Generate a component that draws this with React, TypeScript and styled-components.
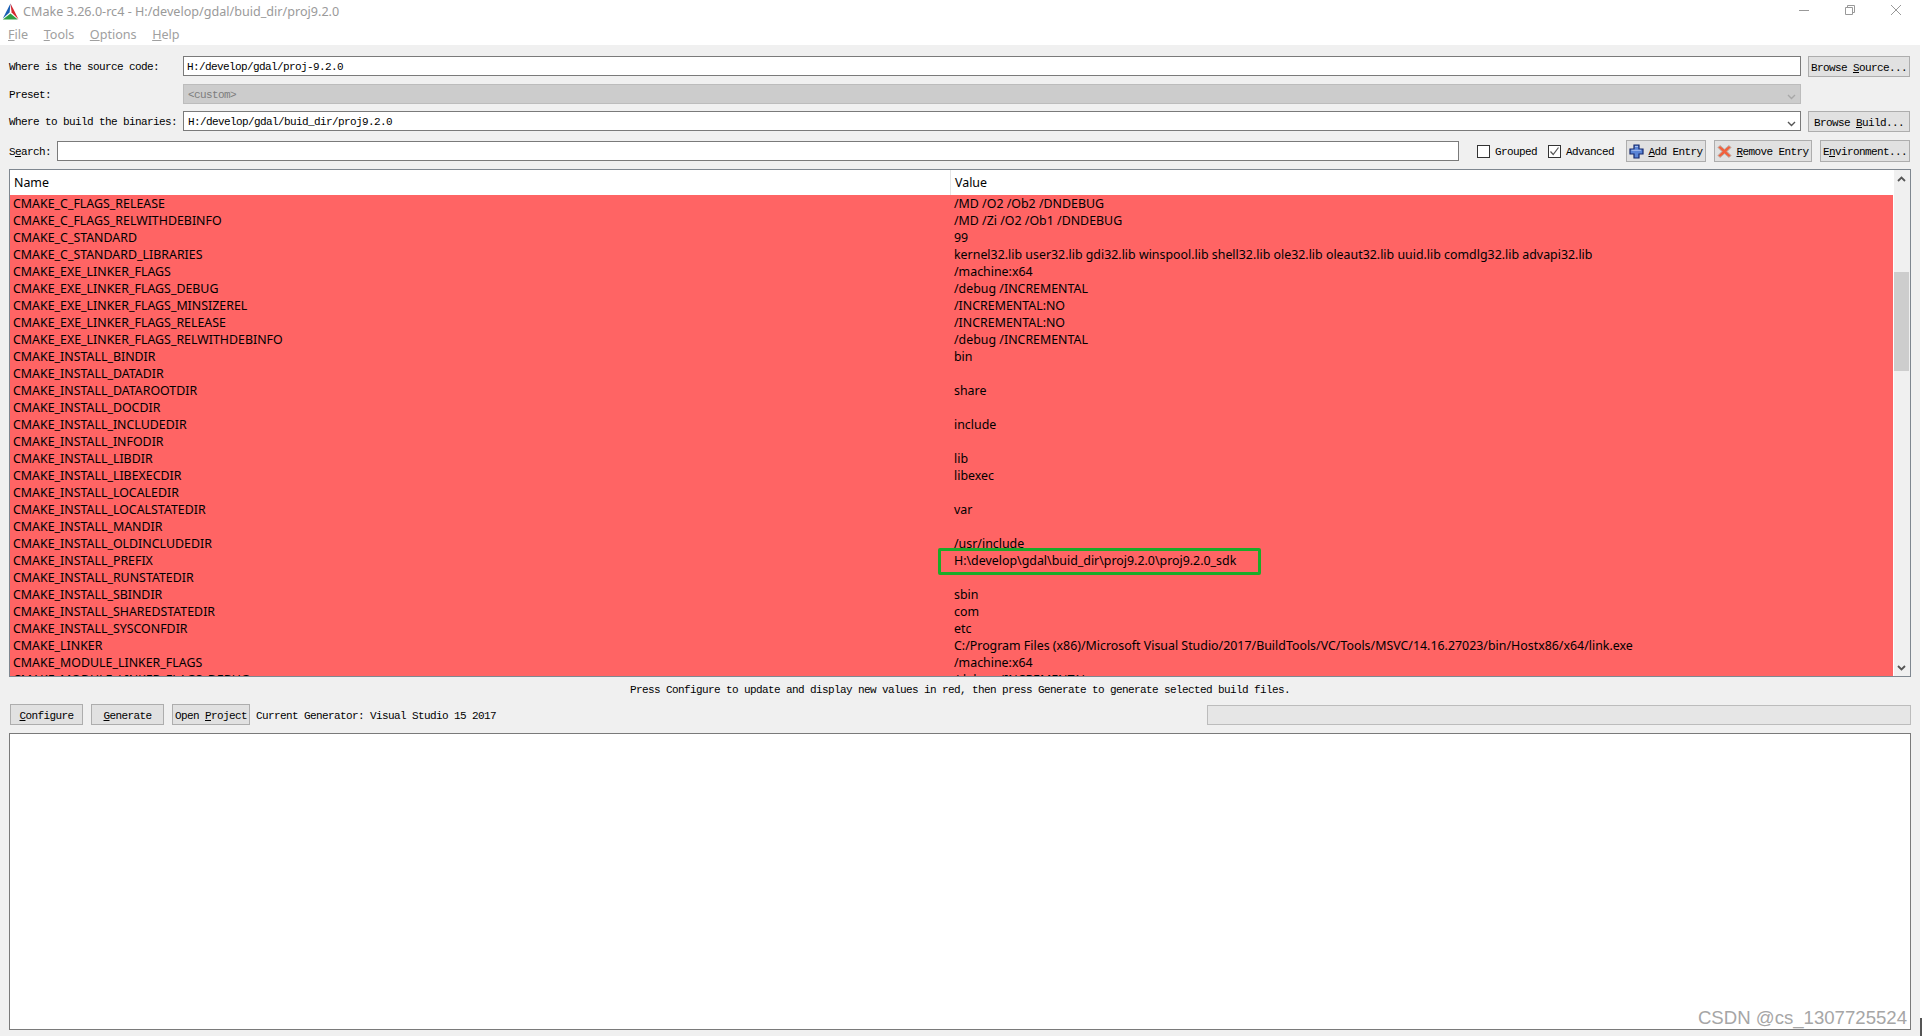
import React from "react";
import styled, { createGlobalStyle } from "styled-components";

const MONO = `"Liberation Mono", "Courier New", monospace`;
const UI = `"Noto Sans", "Open Sans", sans-serif`;

const rows: [string, string][] = [
  ["CMAKE_C_FLAGS_RELEASE", "/MD /O2 /Ob2 /DNDEBUG"],
  ["CMAKE_C_FLAGS_RELWITHDEBINFO", "/MD /Zi /O2 /Ob1 /DNDEBUG"],
  ["CMAKE_C_STANDARD", "99"],
  [
    "CMAKE_C_STANDARD_LIBRARIES",
    "kernel32.lib user32.lib gdi32.lib winspool.lib shell32.lib ole32.lib oleaut32.lib uuid.lib comdlg32.lib advapi32.lib",
  ],
  ["CMAKE_EXE_LINKER_FLAGS", "/machine:x64"],
  ["CMAKE_EXE_LINKER_FLAGS_DEBUG", "/debug /INCREMENTAL"],
  ["CMAKE_EXE_LINKER_FLAGS_MINSIZEREL", "/INCREMENTAL:NO"],
  ["CMAKE_EXE_LINKER_FLAGS_RELEASE", "/INCREMENTAL:NO"],
  ["CMAKE_EXE_LINKER_FLAGS_RELWITHDEBINFO", "/debug /INCREMENTAL"],
  ["CMAKE_INSTALL_BINDIR", "bin"],
  ["CMAKE_INSTALL_DATADIR", ""],
  ["CMAKE_INSTALL_DATAROOTDIR", "share"],
  ["CMAKE_INSTALL_DOCDIR", ""],
  ["CMAKE_INSTALL_INCLUDEDIR", "include"],
  ["CMAKE_INSTALL_INFODIR", ""],
  ["CMAKE_INSTALL_LIBDIR", "lib"],
  ["CMAKE_INSTALL_LIBEXECDIR", "libexec"],
  ["CMAKE_INSTALL_LOCALEDIR", ""],
  ["CMAKE_INSTALL_LOCALSTATEDIR", "var"],
  ["CMAKE_INSTALL_MANDIR", ""],
  ["CMAKE_INSTALL_OLDINCLUDEDIR", "/usr/include"],
  ["CMAKE_INSTALL_PREFIX", "H:\\develop\\gdal\\buid_dir\\proj9.2.0\\proj9.2.0_sdk"],
  ["CMAKE_INSTALL_RUNSTATEDIR", ""],
  ["CMAKE_INSTALL_SBINDIR", "sbin"],
  ["CMAKE_INSTALL_SHAREDSTATEDIR", "com"],
  ["CMAKE_INSTALL_SYSCONFDIR", "etc"],
  [
    "CMAKE_LINKER",
    "C:/Program Files (x86)/Microsoft Visual Studio/2017/BuildTools/VC/Tools/MSVC/14.16.27023/bin/Hostx86/x64/link.exe",
  ],
  ["CMAKE_MODULE_LINKER_FLAGS", "/machine:x64"],
  ["CMAKE_MODULE_LINKER_FLAGS_DEBUG", "/debug /INCREMENTAL"],
];

const Chevron = ({ up, color = "#555", weight = 1.4 }: { up?: boolean; color?: string; weight?: number }) => (
  <svg width="9" height="6" viewBox="0 0 9 6">
    <path
      d={up ? "M1 5 L4.5 1.5 L8 5" : "M1 1 L4.5 4.5 L8 1"}
      fill="none"
      stroke={color}
      strokeWidth={weight}
    />
  </svg>
);

const CMakeLogo = () => (
  <svg width="17" height="17" viewBox="0 0 17 17">
    <path d="M8.5 0.5 L0.8 15.5 L7.6 9.6 Z" fill="#1a5fb4" />
    <path d="M8.5 0.5 L16.6 16.5 L9.6 9.6 Z" fill="#d3272f" />
    <path d="M8.5 10.4 L0.8 16.5 L15.8 16.5 Z" fill="#2f9e44" />
  </svg>
);

const PlusIcon = () => (
  <svg width="15" height="15" viewBox="0 0 15 15">
    <path
      d="M5 1 H10 V5 H14 V10 H10 V14 H5 V10 H1 V5 H5 Z"
      fill="#5a84d6"
      stroke="#14296e"
      strokeWidth="1.2"
    />
    <path d="M6 2.5 H9 M2.5 6.3 H12" stroke="#a9c0ee" strokeWidth="1" />
  </svg>
);

const CrossIcon = () => (
  <svg width="15" height="15" viewBox="0 0 15 15">
    <path
      d="M3 1.5 L7.5 5.2 L12 1.5 L14 3.5 L10 7.5 L14 11.5 L12 13.5 L7.5 9.8 L3 13.5 L1 11.5 L5 7.5 L1 3.5 Z"
      fill="#f2603c"
      stroke="#b9b3ad"
      strokeWidth="1"
    />
  </svg>
);

const App = () => (
  <Page>
    <GlobalStyle />
    <Window>
      <TitleBar>
        <CMakeLogo />
        <TitleText>CMake 3.26.0-rc4 - H:/develop/gdal/buid_dir/proj9.2.0</TitleText>
        <WindowControls>
          <svg width="10" height="10" viewBox="0 0 10 10">
            <path d="M0 5.5 H10" stroke="#999" />
          </svg>
          <svg width="10" height="10" viewBox="0 0 10 10">
            <path d="M0.5 2.5 H7.5 V9.5 H0.5 Z M2.5 2.5 V0.5 H9.5 V7.5 H7.5" fill="none" stroke="#999" />
          </svg>
          <svg width="10" height="10" viewBox="0 0 10 10">
            <path d="M0 0 L10 10 M10 0 L0 10" stroke="#999" />
          </svg>
        </WindowControls>
      </TitleBar>
      <MenuBar>
        <MenuItem><u>F</u>ile</MenuItem>
        <MenuItem><u>T</u>ools</MenuItem>
        <MenuItem><u>O</u>ptions</MenuItem>
        <MenuItem><u>H</u>elp</MenuItem>
      </MenuBar>
      <Body>
        <Form>
          <FormRow>
            <Label>Where is the source code:</Label>
            <Field>H:/develop/gdal/proj-9.2.0</Field>
            <BrowseButton>Browse <u>S</u>ource...</BrowseButton>
          </FormRow>
          <FormRow>
            <Label>Preset:</Label>
            <Field $disabled $inset={4}>
              &lt;custom&gt;
              <ComboArrow><Chevron color="#a8a8a8" /></ComboArrow>
            </Field>
            <BrowseSpacer />
          </FormRow>
          <FormRow>
            <Label>Where to build the binaries:</Label>
            <Field $inset={4}>
              H:/develop/gdal/buid_dir/proj9.2.0
              <ComboArrow><Chevron /></ComboArrow>
            </Field>
            <BrowseButton>Browse <u>B</u>uild...</BrowseButton>
          </FormRow>
          <SearchRow>
            <SearchLabel>S<u>e</u>arch:</SearchLabel>
            <Field />
            <CheckItem $offset={18}>
              <CheckBox />
              <span>Grouped</span>
            </CheckItem>
            <CheckItem $offset={11}>
              <CheckBox>
                <svg width="11" height="11" viewBox="0 0 11 11">
                  <path d="M1.5 5.5 L4.2 8.5 L9.5 1.5" fill="none" stroke="#555" strokeWidth="1.2" />
                </svg>
              </CheckBox>
              <span>Advanced</span>
            </CheckItem>
            <ToolButtons>
              <ToolButton $width={80}><PlusIcon /><span><u>A</u>dd Entry</span></ToolButton>
              <ToolButton $width={98}><CrossIcon /><span><u>R</u>emove Entry</span></ToolButton>
              <ToolButton $width={90}><span>E<u>n</u>vironment...</span></ToolButton>
            </ToolButtons>
          </SearchRow>
        </Form>
        <CacheTable>
          <TableMain>
            <TableHeader>
              <HeaderCell>Name</HeaderCell>
              <HeaderCell>Value</HeaderCell>
            </TableHeader>
            <TableBody>
              {rows.map(([name, value]) => (
                <Row key={name}>
                  <NameCell>{name}</NameCell>
                  <ValueCell>{value}</ValueCell>
                </Row>
              ))}
              <Highlight />
            </TableBody>
          </TableMain>
          <Scrollbar>
            <ScrollArrow><Chevron up weight={1.8} /></ScrollArrow>
            <ScrollThumb />
            <ScrollArrow><Chevron weight={1.8} /></ScrollArrow>
          </Scrollbar>
        </CacheTable>
        <StatusLine>
          Press Configure to update and display new values in red, then press Generate to generate selected build files.
        </StatusLine>
        <ActionRow>
          <ActionButton $width={73}><u>C</u>onfigure</ActionButton>
          <ActionButton $width={73}><u>G</u>enerate</ActionButton>
          <ActionButton $width={78}>Open <u>P</u>roject</ActionButton>
          <GeneratorText>Current Generator: Visual Studio 15 2017</GeneratorText>
          <Progress />
        </ActionRow>
        <LogPanel>
          <Watermark>CSDN @cs_1307725524</Watermark>
        </LogPanel>
      </Body>
    </Window>
    <Gutter>
      <GutterMark />
    </Gutter>
  </Page>
);

const GlobalStyle = createGlobalStyle`
  html, body {
    margin: 0;
    padding: 0;
    background: #fff;
    overflow: hidden;
  }
  u {
    text-underline-offset: 1px;
  }
`;

const Page = styled.div`
  display: flex;
  width: 1922px;
  height: 1036px;
  overflow: hidden;
`;

const Window = styled.div`
  display: flex;
  flex-direction: column;
  width: 1920px;
  height: 100%;
  background: #fff;
`;

const Gutter = styled.div`
  display: flex;
  flex-direction: column;
  justify-content: flex-end;
  width: 2px;
  background: #fff;
`;

const GutterMark = styled.div`
  height: 18px;
  background: #555;
`;

const TitleBar = styled.div`
  display: flex;
  align-items: center;
  height: 23px;
  padding-left: 2px;
`;

const TitleText = styled.span`
  margin-left: 4px;
  font-family: ${UI};
  font-size: 12.6px;
  color: #9a9a9a;
`;

const WindowControls = styled.div`
  display: flex;
  gap: 36px;
  margin-left: auto;
  margin-right: 19px;
  margin-bottom: 3px;
`;

const MenuBar = styled.div`
  display: flex;
  align-items: center;
  gap: 15.5px;
  height: 22px;
  padding-left: 8px;
`;

const MenuItem = styled.span`
  font-family: ${UI};
  font-size: 12.6px;
  color: #a0a0a0;
`;

const Body = styled.div`
  display: flex;
  flex-direction: column;
  flex: 1;
  min-height: 0;
  padding: 0 9px 6px;
  background: #f0f0f0;
  font-family: ${MONO};
  font-size: 11px;
  letter-spacing: -0.6px;
  color: #000;
`;

const Form = styled.div`
  display: grid;
  grid-template-rows: 28px 27px 30px 28px;
  padding: 11px 1px 0 0;
`;

const FormRow = styled.div`
  display: flex;
  align-items: flex-start;
`;

const SearchRow = styled(FormRow)`
  align-items: center;
  height: 20px;
`;

const Label = styled.div`
  flex: none;
  width: 174px;
  line-height: 23px;
`;

const SearchLabel = styled.div`
  flex: none;
  width: 48px;
  padding-top: 2px;
`;

const Field = styled.div<{ $disabled?: boolean; $inset?: number }>`
  position: relative;
  box-sizing: border-box;
  flex: 1;
  min-width: 0;
  height: 20px;
  padding-left: ${({ $inset }) => $inset ?? 3}px;
  border: 1px solid ${({ $disabled }) => ($disabled ? "#bcbcbc" : "#7a7a7a")};
  background: ${({ $disabled }) => ($disabled ? "#cccccc" : "#fff")};
  color: ${({ $disabled }) => ($disabled ? "#7d7d7d" : "#000")};
  line-height: 20px;
`;

const ComboArrow = styled.span`
  position: absolute;
  top: 2px;
  right: 4px;
`;

const BrowseButton = styled.div`
  flex: none;
  box-sizing: border-box;
  width: 102px;
  height: 21px;
  margin-left: 7px;
  border: 1px solid #adadad;
  background: #e1e1e1;
  line-height: 22px;
  text-align: center;
  white-space: nowrap;
`;

const BrowseSpacer = styled.div`
  flex: none;
  width: 109px;
`;

const CheckItem = styled.div<{ $offset: number }>`
  display: flex;
  align-items: center;
  flex: none;
  gap: 5px;
  margin-left: ${({ $offset }) => $offset}px;
  span {
    padding-top: 1px;
  }
`;

const CheckBox = styled.div`
  display: flex;
  align-items: center;
  justify-content: center;
  box-sizing: border-box;
  width: 13px;
  height: 13px;
  border: 1px solid #333;
  background: #fff;
`;

const ToolButtons = styled.div`
  display: flex;
  flex: none;
  gap: 8px;
  margin-left: 12px;
`;

const ToolButton = styled.div<{ $width: number }>`
  display: flex;
  align-items: center;
  justify-content: center;
  gap: 4px;
  box-sizing: border-box;
  width: ${({ $width }) => $width}px;
  height: 22px;
  border: 1px solid #adadad;
  background: #e1e1e1;
  white-space: nowrap;
  span {
    padding-top: 1px;
  }
`;

const CacheTable = styled.div`
  display: flex;
  box-sizing: border-box;
  height: 508px;
  border: 1px solid #7f8790;
  background: #fff;
`;

const TableMain = styled.div`
  display: flex;
  flex-direction: column;
  flex: 1;
  min-width: 0;
  font-family: ${UI};
  font-size: 12.4px;
  letter-spacing: 0;
`;

const TableHeader = styled.div`
  display: grid;
  flex: none;
  grid-template-columns: 941px 1fr;
  height: 25px;
  background: #fff;
`;

const HeaderCell = styled.div`
  padding-left: 4px;
  border-right: 1px solid #e5e5e5;
  line-height: 25px;
  &:last-child {
    border-right: 0;
    padding-left: 4px;
  }
`;

const TableBody = styled.div`
  position: relative;
  flex: 1;
  min-height: 0;
  overflow: hidden;
  background: #ff6464;
`;

const Row = styled.div`
  display: grid;
  grid-template-columns: 940px 1fr;
  height: 17px;
  line-height: 17px;
  white-space: nowrap;
`;

const NameCell = styled.div`
  padding-left: 3px;
`;

const ValueCell = styled.div`
  padding-left: 4px;
`;

const Highlight = styled.div`
  position: absolute;
  top: 353px;
  left: 928px;
  box-sizing: border-box;
  width: 323px;
  height: 27px;
  border: 3px solid #1aab29;
  border-radius: 2px;
`;

const Scrollbar = styled.div`
  display: flex;
  flex-direction: column;
  flex: none;
  box-sizing: border-box;
  width: 17px;
  border-left: 1px solid #fff;
  background: #f0f0f0;
`;

const ScrollArrow = styled.div`
  display: flex;
  align-items: center;
  justify-content: center;
  flex: none;
  height: 17px;
  padding-right: 1px;
  &:last-child {
    margin-top: auto;
  }
`;

const ScrollThumb = styled.div`
  flex: none;
  height: 99px;
  margin: 85px 1px 0 0;
  background: #cdcdcd;
`;

const StatusLine = styled.div`
  flex: none;
  height: 27px;
  line-height: 26px;
  text-align: center;
  white-space: nowrap;
`;

const ActionRow = styled.div`
  display: flex;
  align-items: center;
  flex: none;
  height: 21px;
  padding-left: 1px;
`;

const ActionButton = styled.div<{ $width: number }>`
  flex: none;
  box-sizing: border-box;
  width: ${({ $width }) => $width}px;
  height: 21px;
  margin-right: 8px;
  border: 1px solid #adadad;
  background: #e1e1e1;
  line-height: 22px;
  text-align: center;
  white-space: nowrap;
`;

const GeneratorText = styled.span`
  margin: 2px 0 0 -2px;
  white-space: nowrap;
`;

const Progress = styled.div`
  flex: none;
  box-sizing: border-box;
  width: 704px;
  height: 20px;
  margin-left: auto;
  border: 1px solid #bcbcbc;
  background: #e6e6e6;
`;

const LogPanel = styled.div`
  position: relative;
  flex: 1;
  margin-top: 8px;
  border: 1px solid #7a7a7a;
  background: #fff;
`;

const Watermark = styled.div`
  position: absolute;
  right: 3px;
  bottom: 0;
  font-family: "Liberation Sans", Arial, sans-serif;
  font-size: 18.6px;
  letter-spacing: 0;
  color: #a6a6a6;
  white-space: nowrap;
`;

export default App;
